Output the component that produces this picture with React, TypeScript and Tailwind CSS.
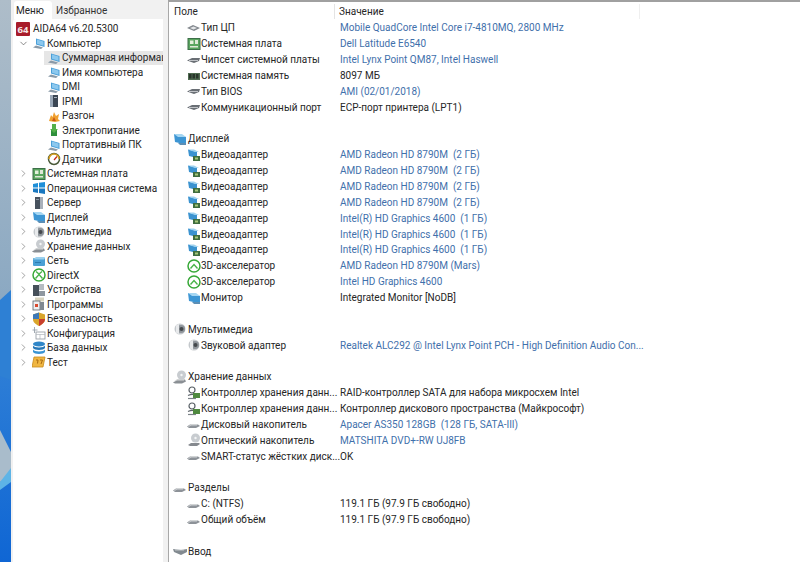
import { ReactNode } from 'react';
import { ChevronDown, ChevronRight } from 'lucide-react';

type IconKind =
  | 'aida' | 'laptop' | 'server' | 'flame' | 'power' | 'gauge' | 'board' | 'windows' | 'tower'
  | 'display' | 'sound' | 'storage' | 'network' | 'xbox' | 'directx' | 'devices' | 'programs' | 'shield'
  | 'config' | 'database' | 'test' | 'chip' | 'ram' | 'gpu' | 'controller' | 'hdd' | 'cd' | 'input' | 'port';

const ICONS: Record<IconKind, ReactNode> = {
  aida: (
    <>
      <rect x="0" y="0" width="14" height="14" rx="1" fill="#a81c2a" />
      <text x="7" y="10.5" textAnchor="middle" fontSize="9.5" fontWeight="700" fill="#f5e6e6" fontFamily="Open Sans, sans-serif">64</text>
    </>
  ),
  laptop: (
    <>
      <path d="M4 2.5 12.5 5v6L4 8.5z" fill="#4a9fd8" />
      <path d="M5 3.5 11.5 5.5v4.200L5 7.800z" fill="#8cc8ee" />
      <path d="M1 11.500 4 9.500 11 11.500 9 13z" fill="#8a9aa8" />
    </>
  ),
  server: (
    <>
      <rect x="3" y="1" width="8" height="12" fill="#3b4654" />
      <rect x="3" y="1" width="3" height="12" fill="#9aa8b8" />
      <rect x="7" y="3" width="3" height="1" fill="#aab4c0" />
    </>
  ),
  flame: (
    <>
      <path d="M2 12 4 6l1.500 2L7 3l2 4 3-2-1 5 2 2-5 1z" fill="#f0a030" />
      <path d="M5 12 7 8l2 4z" fill="#c85a14" />
    </>
  ),
  power: (
    <>
      <rect x="4" y="7" width="6" height="6" fill="#2f8f3c" />
      <path d="M5 1h4v5h2L7 10 3 6h2z" fill="#55b04a" />
    </>
  ),
  gauge: (
    <>
      <circle cx="7" cy="7" r="5.500" fill="#fff" stroke="#4a5a3a" strokeWidth="1.500" />
      <path d="M2 7a5 5 0 0 1 10 0" fill="none" stroke="#d8a020" strokeWidth="1.500" />
      <path d="M7 8 10 4.500" stroke="#c02a1a" strokeWidth="1.200" />
    </>
  ),
  board: (
    <>
      <rect x="1" y="1.500" width="12" height="11" fill="#5aa55f" stroke="#3c6f48" />
      <rect x="3" y="3.500" width="3.500" height="3.500" fill="#e4f0dc" />
      <rect x="8" y="3" width="3" height="4" fill="#dfe8d8" />
      <rect x="3" y="9" width="8" height="1.500" fill="#dfe8d8" />
    </>
  ),
  windows: (
    <>
      <path d="M1 3 6 2v4.500H1z" fill="#1f8fd8" />
      <path d="M7 1.800 13 1v5.500H7z" fill="#1f8fd8" />
      <path d="M1 7.500h5V12l-5-1z" fill="#1a78c0" />
      <path d="M7 7.500h6V13l-6-1z" fill="#1a78c0" />
    </>
  ),
  tower: (
    <>
      <rect x="3" y="1" width="8" height="12" fill="#48525e" />
      <rect x="8" y="1" width="3" height="12" fill="#a8b0ba" />
      <rect x="4" y="3" width="3" height="1" fill="#8a949e" />
    </>
  ),
  display: (
    <>
      <path d="M1 2 13 5v7.500L2 10z" fill="#3d96d4" />
      <path d="M1 2h8l4 3H5z" fill="#a5d6f2" />
      <path d="M5 11h8v2H7z" fill="#5d8fb5" />
    </>
  ),
  sound: (
    <>
      <circle cx="7" cy="7" r="5.500" fill="#c4c8cc" />
      <circle cx="8" cy="7" r="4" fill="#8e949a" />
      <circle cx="8.500" cy="7" r="2" fill="#44484c" />
      <path d="M3 3.500a5 5 0 0 1 3-1.500v10a5 5 0 0 1-3-1.500z" fill="#e8eaec" />
    </>
  ),
  storage: (
    <>
      <circle cx="8.500" cy="5" r="4.500" fill="#c8ccd0" />
      <circle cx="8.500" cy="5" r="1.200" fill="#f4f5f6" />
      <path d="M0 12.500 4 9.500h8l1 2-4 2H2z" fill="#8a8f94" />
      <path d="M1 11.500 4 10h7" stroke="#e8e8e8" strokeWidth="0.800" fill="none" />
    </>
  ),
  network: (
    <>
      <rect x="1" y="4" width="12" height="8" rx="1" fill="#4aa0d5" />
      <path d="M1 5.500 4 3h9l-1 2.500z" fill="#9ad0ee" />
      <rect x="3" y="8" width="6" height="1" fill="#2c7bb0" />
    </>
  ),
  xbox: (
    <>
      <circle cx="7" cy="7" r="6" fill="#fff" stroke="#36a836" strokeWidth="1.500" />
      <path d="M3.500 9.500 7 5.500l3.500 4" fill="none" stroke="#49b449" strokeWidth="1.400" />
    </>
  ),
  directx: (
    <>
      <circle cx="7" cy="7" r="6" fill="#fff" stroke="#36a836" strokeWidth="1.500" />
      <path d="M3.500 10.500 7 6.500l3.500 4M4 3.500 7 6l3-2.500" fill="none" stroke="#49b449" strokeWidth="1.400" />
    </>
  ),
  devices: (
    <>
      <rect x="1" y="2" width="6" height="11" fill="#46505a" />
      <rect x="7" y="1" width="5" height="6" fill="#b6bcc2" />
      <rect x="7" y="8" width="6" height="5" fill="#8f979f" />
    </>
  ),
  programs: (
    <>
      <rect x="3" y="0.500" width="9" height="4" fill="#d8d4c0" />
      <rect x="1" y="4" width="7" height="9" fill="#eef0f2" stroke="#59636d" strokeWidth="0.800" />
      <rect x="8" y="5" width="4" height="8" fill="#808890" />
      <rect x="3" y="7" width="3" height="3" fill="#d84a30" />
    </>
  ),
  shield: (
    <>
      <path d="M7 0.500 13 2.500v5c0 3-3 5-6 6.500-3-1.500-6-3.500-6-6.500v-5z" fill="#d9a52b" />
      <path d="M7 0.500 1 2.500v4.500h6z" fill="#3c78b8" />
      <path d="M7 7h6c0 3-3 5.500-6 7z" fill="#c83e2e" />
    </>
  ),
  config: (
    <>
      <rect x="4" y="6" width="9" height="7" fill="#fff" stroke="#8f979f" strokeWidth="0.800" />
      <path d="M4 8.500h9M8 8.500V13" stroke="#b0b6bc" strokeWidth="0.700" />
      <path d="M2.500 1v6M0.500 4h5" stroke="#99a2aa" strokeWidth="0.900" />
    </>
  ),
  database: (
    <>
      <ellipse cx="7" cy="3" rx="6" ry="2.500" fill="#2f86c8" />
      <path d="M1 4.500c1 2.500 11 2.500 12 0v2.500c-1 2.500-11 2.500-12 0z" fill="#2778b8" />
      <path d="M1 8.500c1 2.500 11 2.500 12 0V11c-1 2.500-11 2.500-12 0z" fill="#3a94d4" />
    </>
  ),
  test: (
    <>
      <path d="M2 2h11l-2 10H0z" fill="#f0b642" stroke="#c88a1c" strokeWidth="0.800" />
      <path d="M4 5h2l-.500 3.500M8 5h2.500L9 9" fill="none" stroke="#a86a10" strokeWidth="1" />
    </>
  ),
  chip: (
    <>
      <path d="M0 7 6 4l7 3-6 3z" fill="#83888e" />
      <path d="M3 7 6.500 5.500 10 7 6.500 8.500z" fill="#e4e6e8" />
    </>
  ),
  ram: (
    <>
      <rect x="1" y="4" width="12" height="7" fill="#4f6b50" />
      <rect x="2" y="5" width="2.500" height="4.500" fill="#28352a" />
      <rect x="5.500" y="5" width="2.500" height="4.500" fill="#28352a" />
      <rect x="9" y="5" width="2.500" height="4.500" fill="#28352a" />
    </>
  ),
  gpu: (
    <>
      <path d="M1 1.500 10 4v6L2 8z" fill="#3b93d0" />
      <path d="M1 1.500h6L12 4H8z" fill="#9ed2ef" />
      <rect x="6" y="8" width="7" height="5" fill="#3f6d3f" />
      <rect x="8" y="9.500" width="3" height="2" fill="#a5c878" />
    </>
  ),
  controller: (
    <>
      <circle cx="5" cy="4" r="3" fill="none" stroke="#596066" strokeWidth="1.200" />
      <path d="M1 9.500c3-1.500 6-1.500 8 0" stroke="#5f666c" strokeWidth="1.200" fill="none" />
      <rect x="6" y="7" width="7" height="5" fill="#4f8a3f" />
      <path d="M1 12.500h8" stroke="#7b8288" strokeWidth="1.200" />
    </>
  ),
  hdd: (
    <>
      <path d="M0 9.500 3 7.500h8l2 1.500-4 2H2z" fill="#8d9298" />
      <path d="M1.500 9.500 4 8h6" stroke="#e2e4e6" strokeWidth="0.800" fill="none" />
    </>
  ),
  cd: (
    <>
      <circle cx="8.500" cy="5" r="4.500" fill="#c8ccd0" />
      <circle cx="8.500" cy="5" r="1.200" fill="#f4f5f6" />
      <path d="M1 12 4 10h8l1 1-3 2H3z" fill="#85898e" />
    </>
  ),
  input: (
    <>
      <path d="M0 5 8 6l6-1v3L8 11 1 8z" fill="#828a90" />
      <path d="M2 6h9" stroke="#d4d8da" strokeWidth="0.800" />
    </>
  ),
  port: (
    <>
      <path d="M0 7.500 5 5h8l-1 3-5 2z" fill="#696e74" />
      <path d="M2 7.500h9" stroke="#d6d8da" strokeWidth="0.800" />
    </>
  ),
};

function Icon({ kind }: { kind: IconKind }) {
  return (
    <svg width="14" height="14" viewBox="0 0 14 14" className="shrink-0">
      {ICONS[kind]}
    </svg>
  );
}

const TREE_CHILDREN: { icon: IconKind; label: string; selected?: boolean }[] = [
  { icon: 'laptop', label: 'Суммарная информация', selected: true },
  { icon: 'laptop', label: 'Имя компьютера' },
  { icon: 'laptop', label: 'DMI' },
  { icon: 'server', label: 'IPMI' },
  { icon: 'flame', label: 'Разгон' },
  { icon: 'power', label: 'Электропитание' },
  { icon: 'laptop', label: 'Портативный ПК' },
  { icon: 'gauge', label: 'Датчики' },
];

const TREE_ROOTS: { icon: IconKind; label: string }[] = [
  { icon: 'board', label: 'Системная плата' },
  { icon: 'windows', label: 'Операционная система' },
  { icon: 'tower', label: 'Сервер' },
  { icon: 'display', label: 'Дисплей' },
  { icon: 'sound', label: 'Мультимедиа' },
  { icon: 'storage', label: 'Хранение данных' },
  { icon: 'network', label: 'Сеть' },
  { icon: 'directx', label: 'DirectX' },
  { icon: 'devices', label: 'Устройства' },
  { icon: 'programs', label: 'Программы' },
  { icon: 'shield', label: 'Безопасность' },
  { icon: 'config', label: 'Конфигурация' },
  { icon: 'database', label: 'База данных' },
  { icon: 'test', label: 'Тест' },
];

type Row =
  | { type: 'empty' }
  | { type: 'group'; icon: IconKind; label: string }
  | { type: 'field'; icon: IconKind; label: string; value: string; link?: boolean };

const AMD = 'AMD Radeon HD 8790M  (2 ГБ)';
const HD = 'Intel(R) HD Graphics 4600  (1 ГБ)';

const ROWS: Row[] = [
  { type: 'field', icon: 'chip', label: 'Тип ЦП', value: 'Mobile QuadCore Intel Core i7-4810MQ, 2800 MHz', link: true },
  { type: 'field', icon: 'board', label: 'Системная плата', value: 'Dell Latitude E6540', link: true },
  { type: 'field', icon: 'port', label: 'Чипсет системной платы', value: 'Intel Lynx Point QM87, Intel Haswell', link: true },
  { type: 'field', icon: 'ram', label: 'Системная память', value: '8097 МБ' },
  { type: 'field', icon: 'port', label: 'Тип BIOS', value: 'AMI (02/01/2018)', link: true },
  { type: 'field', icon: 'port', label: 'Коммуникационный порт', value: 'ECP-порт принтера (LPT1)' },
  { type: 'empty' },
  { type: 'group', icon: 'display', label: 'Дисплей' },
  { type: 'field', icon: 'gpu', label: 'Видеоадаптер', value: AMD, link: true },
  { type: 'field', icon: 'gpu', label: 'Видеоадаптер', value: AMD, link: true },
  { type: 'field', icon: 'gpu', label: 'Видеоадаптер', value: AMD, link: true },
  { type: 'field', icon: 'gpu', label: 'Видеоадаптер', value: AMD, link: true },
  { type: 'field', icon: 'gpu', label: 'Видеоадаптер', value: HD, link: true },
  { type: 'field', icon: 'gpu', label: 'Видеоадаптер', value: HD, link: true },
  { type: 'field', icon: 'gpu', label: 'Видеоадаптер', value: HD, link: true },
  { type: 'field', icon: 'xbox', label: '3D-акселератор', value: 'AMD Radeon HD 8790M (Mars)', link: true },
  { type: 'field', icon: 'xbox', label: '3D-акселератор', value: 'Intel HD Graphics 4600', link: true },
  { type: 'field', icon: 'display', label: 'Монитор', value: 'Integrated Monitor [NoDB]' },
  { type: 'empty' },
  { type: 'group', icon: 'sound', label: 'Мультимедиа' },
  { type: 'field', icon: 'sound', label: 'Звуковой адаптер', value: 'Realtek ALC292 @ Intel Lynx Point PCH - High Definition Audio Con...', link: true },
  { type: 'empty' },
  { type: 'group', icon: 'storage', label: 'Хранение данных' },
  { type: 'field', icon: 'controller', label: 'Контроллер хранения данн...', value: 'RAID-контроллер SATA для набора микросхем Intel' },
  { type: 'field', icon: 'controller', label: 'Контроллер хранения данн...', value: 'Контроллер дискового пространства (Майкрософт)' },
  { type: 'field', icon: 'hdd', label: 'Дисковый накопитель', value: 'Apacer AS350 128GB  (128 ГБ, SATA-III)', link: true },
  { type: 'field', icon: 'cd', label: 'Оптический накопитель', value: 'MATSHITA DVD+-RW UJ8FB', link: true },
  { type: 'field', icon: 'hdd', label: 'SMART-статус жёстких диск...', value: 'OK' },
  { type: 'empty' },
  { type: 'group', icon: 'hdd', label: 'Разделы' },
  { type: 'field', icon: 'hdd', label: 'C: (NTFS)', value: '119.1 ГБ (97.9 ГБ свободно)' },
  { type: 'field', icon: 'hdd', label: 'Общий объём', value: '119.1 ГБ (97.9 ГБ свободно)' },
  { type: 'empty' },
  { type: 'group', icon: 'input', label: 'Ввод' },
];

function Sidebar() {
  return (
    <div className="flex flex-col w-[157px] shrink-0 bg-[#f1f1f1]">
      <div className="flex h-[19px] shrink-0 items-end">
        <div className="h-[18px] ml-[3px] w-[38px] bg-white rounded-t-[3px] pl-[2px] leading-[19px]">Меню</div>
        <div className="h-[18px] pl-[4px] leading-[19px] text-[#333]">Избранное</div>
      </div>
      <div className="flex-1 ml-[2px] mr-[5px] pt-[2.500px] bg-white rounded-tl-[3px] overflow-hidden">
        <div className="flex items-center h-[14.500px] pl-[3px] gap-[3px]">
          <Icon kind="aida" />
          <span>AIDA64 v6.20.5300</span>
        </div>
        <div className="flex items-center h-[14.500px] pl-[5px]">
          <ChevronDown size={11} strokeWidth={1.5} className="text-[#555] shrink-0" />
          <span className="w-[3px] shrink-0" />
          <Icon kind="laptop" />
          <span className="ml-[1px]">Компьютер</span>
        </div>
        {TREE_CHILDREN.map((c) => (
          <div key={c.label} className={`flex items-center h-[14.500px] ml-[31px] pl-[3px] gap-[1px] whitespace-nowrap overflow-hidden ${c.selected ? 'bg-[#e6e6e6]' : ''}`}>
            <Icon kind={c.icon} />
            <span>{c.label}</span>
          </div>
        ))}
        {TREE_ROOTS.map((r) => (
          <div key={r.label} className="flex items-center h-[14.500px] pl-[5px] whitespace-nowrap">
            <ChevronRight size={11} strokeWidth={1.5} className="text-[#777] shrink-0" />
            <span className="w-[3px] shrink-0" />
            <Icon kind={r.icon} />
            <span className="ml-[1px]">{r.label}</span>
          </div>
        ))}
      </div>
    </div>
  );
}

function DetailRow({ row }: { row: Row }) {
  if (row.type === 'empty') return <div className="h-[15.870px]" />;
  if (row.type === 'group') {
    return (
      <div className="flex items-center h-[15.870px] pl-[4px] gap-[1px] whitespace-nowrap">
        <Icon kind={row.icon} />
        <span>{row.label}</span>
      </div>
    );
  }
  return (
    <div className="flex items-center h-[15.870px] whitespace-pre">
      <div className="flex items-center w-[171px] shrink-0 pl-[18px]">
        <Icon kind={row.icon} />
        <span>{row.label}</span>
      </div>
      <span className={row.link ? 'text-[#3f70ab]' : ''}>{row.value}</span>
    </div>
  );
}

function Details() {
  return (
    <div className="flex-1 flex flex-col min-w-0 bg-white border-l border-t-2 border-l-[#a8a8a8] border-t-[#a0a0a0]">
      <div className="flex h-[18px] shrink-0 items-center">
        <div className="w-[166px] shrink-0 pl-[5px] border-r border-[#e4e4e4]">Поле</div>
        <div className="w-[305px] shrink-0 pl-[4px] border-r border-[#efefef]">Значение</div>
      </div>
      <div className="flex-1 overflow-hidden">
        {ROWS.map((row, i) => (
          <DetailRow key={i} row={row} />
        ))}
      </div>
    </div>
  );
}

export default function App() {
  return (
    <div className="flex w-[800px] h-[562px] overflow-hidden bg-white text-[10px] text-[#262626] font-['Roboto',sans-serif]">
      <svg width="11" height="562" viewBox="0 0 11 562" preserveAspectRatio="none" className="shrink-0">
        <defs>
          <linearGradient id="wall" x1="0" y1="0" x2="0" y2="1">
            <stop offset="0" stopColor="#aebdc9" />
            <stop offset="0.55" stopColor="#8aa8c2" />
            <stop offset="0.64" stopColor="#2f7fd6" />
            <stop offset="1" stopColor="#0f66d4" />
          </linearGradient>
        </defs>
        <rect width="11" height="562" fill="url(#wall)" />
        <path d="M0 300 11 290v90L0 376z" fill="#2e80d4" />
        <path d="M0 430 11 452v24L0 482z" fill="#a9bccb" />
        <path d="M0 482 11 468v14L0 490z" fill="#5eb4e6" />
      </svg>
      <Sidebar />
      <Details />
    </div>
  );
}
